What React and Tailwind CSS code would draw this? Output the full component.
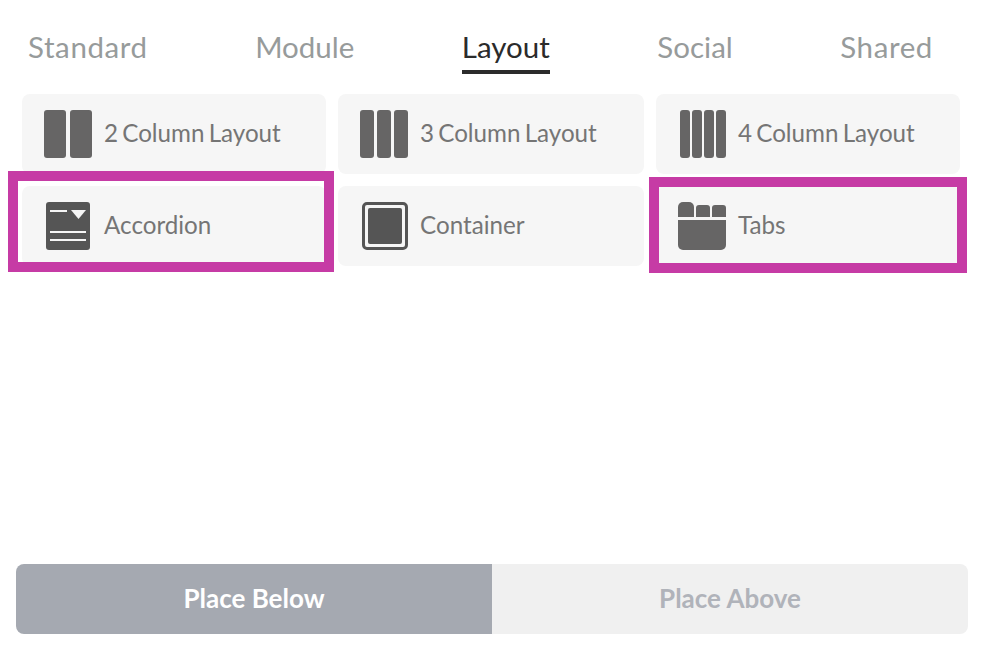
import React from "react";

const tabs = [
  { name: "Standard", cls: "tracking-[0.6px] text-[#979b9b]" },
  { name: "Module", cls: "text-[#979b9b]" },
  { name: "Layout", cls: "border-b-4 border-[#2b2b2b] text-[#2b2b2b]" },
  { name: "Social", cls: "text-[#979b9b]" },
  { name: "Shared", cls: "tracking-[0.6px] text-[#979b9b]" },
];

const Columns = ({ bars }) => (
  <svg width="48" height="48" viewBox="0 0 48 48" className="shrink-0">
    {bars.map(([x, w]) => (
      <rect key={x} x={x} y="0" width={w} height="48" rx="3" fill="#666565" />
    ))}
  </svg>
);

const AccordionIcon = () => (
  <svg width="48" height="48" viewBox="0 0 48 48" className="shrink-0">
    <rect x="2" y="0" width="44" height="48" rx="3" fill="#555555" />
    <rect x="6" y="8" width="17" height="2" fill="#f5f5f5" />
    <path d="M27 8h15l-7.5 9z" fill="#f5f5f5" />
    <rect x="6" y="29" width="36" height="2" fill="#f5f5f5" />
    <rect x="6" y="37" width="36" height="2" fill="#f5f5f5" />
  </svg>
);

const ContainerIcon = () => (
  <svg width="48" height="48" viewBox="0 0 48 48" className="shrink-0">
    <rect x="3.5" y="1.5" width="43" height="45" rx="3.5" fill="none" stroke="#555555" strokeWidth="3" />
    <rect x="8" y="6" width="34" height="36" rx="2" fill="#555555" />
  </svg>
);

const TabsIcon = () => (
  <svg width="48" height="48" viewBox="0 0 48 48" className="shrink-0">
    <path d="M0 15V5a5 5 0 0 1 5-5h6a5 5 0 0 1 5 5v10z" fill="#666565" />
    <path d="M18 15V6a3 3 0 0 1 3-3h8a3 3 0 0 1 3 3v9z" fill="#666565" />
    <path d="M34 15V6a3 3 0 0 1 3-3h8a3 3 0 0 1 3 3v9z" fill="#666565" />
    <path d="M0 18h48v25a5 5 0 0 1-5 5H5a5 5 0 0 1-5-5z" fill="#666565" />
  </svg>
);

const Card = ({ icon, label, children }) => (
  <div className="relative flex h-20 items-center gap-3 rounded-lg bg-[#f6f6f6] pl-[22px]">
    {icon}
    <span className="pb-0.5 text-[24.2px] text-[#757575] [word-spacing:-2px]">{label}</span>
    {children}
  </div>
);

const App = () => {
  return (
    <div className="flex h-[650px] w-[984px] flex-col bg-white font-['Lato',_'Liberation_Sans',_sans-serif]">
      <div className="flex justify-between pl-7 pr-[51px] pt-[26px]">
        {tabs.map((tab) => (
          <div key={tab.name} className={`h-[48px] text-[29.5px] leading-[42px] ${tab.cls}`}>
            {tab.name}
          </div>
        ))}
      </div>

      <div className="ml-[22px] mt-5 grid grid-cols-[304px_306px_304px] gap-x-3 gap-y-3">
        <Card icon={<Columns bars={[[0, 22], [26, 22]]} />} label="2 Column Layout" />
        <Card icon={<Columns bars={[[0, 14], [17, 14], [34, 14]]} />} label="3 Column Layout" />
        <Card icon={<Columns bars={[[2, 10], [14, 10], [26, 10], [38, 10]]} />} label="4 Column Layout" />
        <Card icon={<AccordionIcon />} label="Accordion">
          <div className="pointer-events-none absolute left-[-14px] top-[-15px] h-[101px] w-[326px] border-10 border-[#c63ba5]" />
        </Card>
        <Card icon={<ContainerIcon />} label="Container" />
        <Card icon={<TabsIcon />} label="Tabs">
          <div className="pointer-events-none absolute left-[-7px] top-[-9px] h-[96px] w-[318px] border-10 border-[#c63ba5]" />
        </Card>
      </div>

      <div className="mx-4 mb-4 mt-auto flex h-[70px] overflow-hidden rounded-lg text-[26px] font-bold">
        <div className="flex w-[476px] items-center justify-center bg-[#a5a9b1] pb-0.5 text-white">Place Below</div>
        <div className="flex flex-1 items-center justify-center bg-[#f0f0f0] pb-0.5 text-[#b0b3ba]">Place Above</div>
      </div>
    </div>
  );
};

export default App;
